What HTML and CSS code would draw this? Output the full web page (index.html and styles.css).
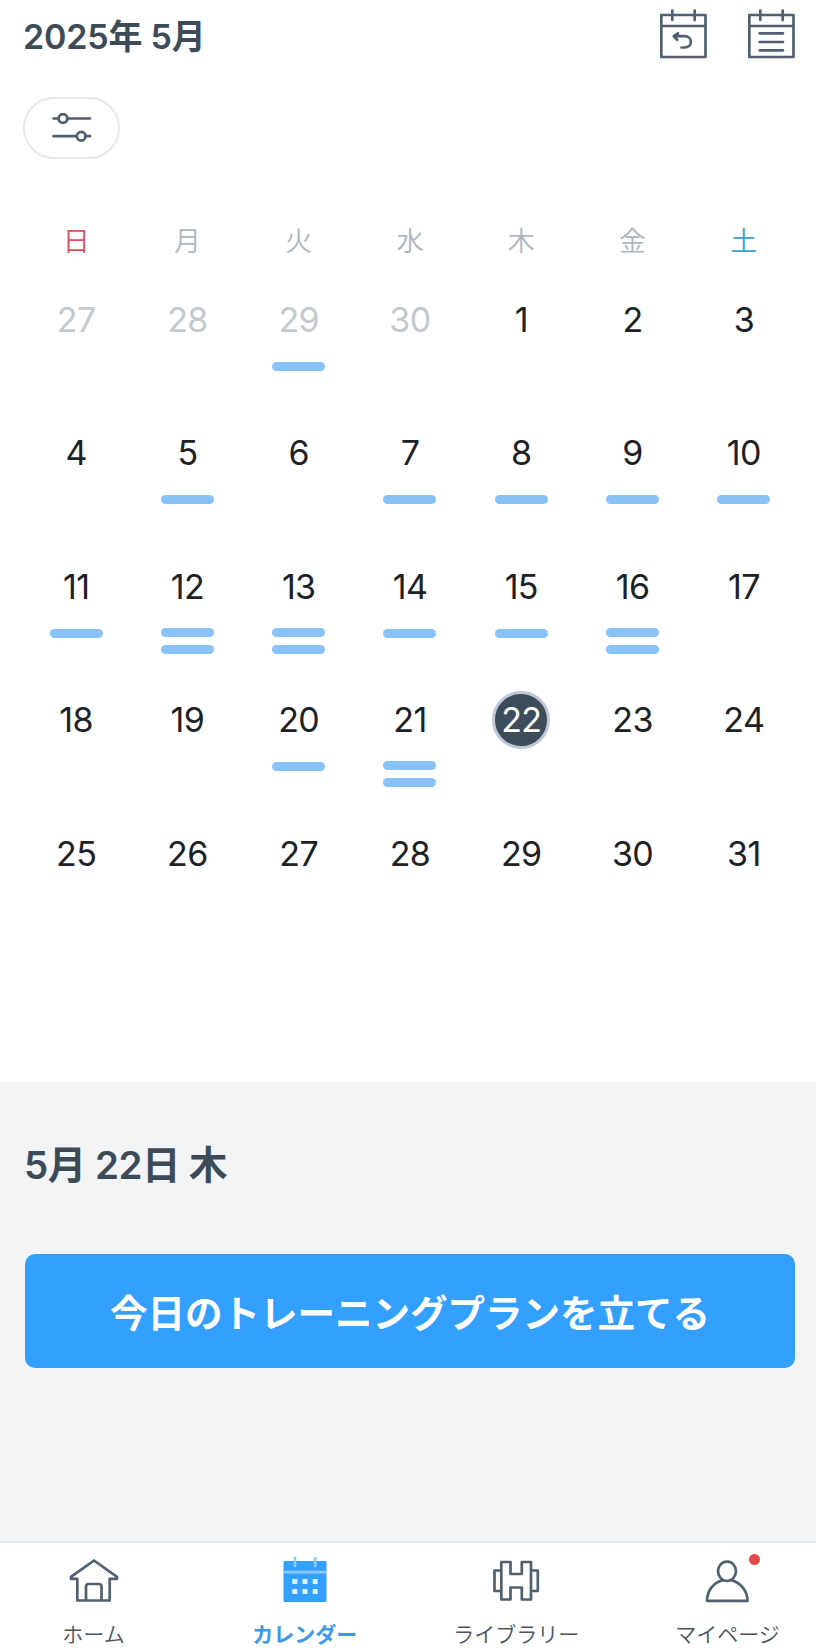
FILE: index.html
```html
<!DOCTYPE html>
<html lang="ja">
	<head>
		<meta charset="utf-8">
		<title>カレンダー</title>
		<link rel="stylesheet" href="styles.css">
	</head>
	<body>
		<div class="header">
			<div class="month">2025年 5月</div>
			<div class="actions">
				<svg class="actionIcon" width="48" height="50" viewBox="0 0 48 50">
					<path d="M2.300 6h44.200v42H2.300zM2.300 17h44.200M13.300 1.500v9.500M35.700 1.500v9.500"/>
					<path d="M19 24.300l-4.200 2.900 3.400 3.500M15.500 27.200H25.500c8.500 0 8.500 11.300 0 11.300h-3"/>
				</svg>
				<svg class="actionIcon" width="48" height="50" viewBox="0 0 48 50">
					<path d="M2.300 6h44.200v42H2.300zM2.300 17h44.200M13.300 1.500v9.500M35.700 1.500v9.500"/>
					<path d="M12.700 24.300h23.300M12.700 33h23.300M12.700 41.300h23.300"/>
				</svg>
			</div>
		</div>

		<div class="filterButton">
			<svg width="40" height="30" viewBox="0 0 40 30">
				<path d="M1.500 5.500h5M15 5.500h23M1.500 23.200h23M33 23.200h5"/>
				<circle cx="11" cy="5.500" r="4.400"/>
				<circle cx="29.200" cy="23.200" r="4.400"/>
			</svg>
		</div>

		<div class="weekdays">
			<div class="sunday">日</div>
			<div>月</div>
			<div>火</div>
			<div>水</div>
			<div>木</div>
			<div>金</div>
			<div class="saturday">土</div>
		</div>
		<div id="days" class="days"></div>

		<div class="plan">
			<div class="planDate">5月 22日 木</div>
			<div class="planButton">今日のトレーニングプランを立てる</div>
		</div>

		<div class="nav">
			<div class="navItem">
				<svg width="52" height="48" viewBox="0 0 52 48">
					<path d="M26 3.500L3 19.800v2h6.300V43.500h32.400V21.800H49v-2zM18 43V29.500q0-2.500 2.500-2.500h10.500q2.500 0 2.500 2.500V43"/>
				</svg>
				<span>ホーム</span>
			</div>
			<div class="navItem active">
				<svg width="52" height="48" viewBox="0 0 52 48">
					<rect class="fill" x="4.500" y="4" width="43" height="41" rx="1"/>
					<path class="light" d="M4.500 15.200h43M16 0v10M36.200 0v10"/>
					<path class="dots" d="M13.300 22h5v5h-5zM23.500 22h5v5h-5zM33.700 22h5v5h-5zM13.300 32h5v5h-5zM23.500 32h5v5h-5zM33.700 32h5v5h-5z"/>
				</svg>
				<span>カレンダー</span>
			</div>
			<div class="navItem">
				<svg width="52" height="48" viewBox="0 0 52 48">
					<path d="M11.300 5h9.200v12h11.300V5H41v37.500h-9.200v-12H20.500v12h-9.200zM11.300 13.500H4.500v20.500h6.800M41 13.500h6.800v20.500H41"/>
				</svg>
				<span>ライブラリー</span>
			</div>
			<div class="navItem">
				<svg width="52" height="48" viewBox="0 0 52 48">
					<ellipse cx="26" cy="14.300" rx="9" ry="9.700"/>
					<path d="M21.500 23.300C12 26 6 34 6 43.800h40.500C46.500 34 40 26 30.500 23.300"/>
				</svg>
				<span>マイページ</span>
				<i class="badge"></i>
			</div>
		</div>

		<script type="text/javascript">
			var today = 22;
			var lastMonth = [27, 28, 29, 30];
			// number of trainings by cell, row by row
			var trainings = [
				0, 0, 1, 0, 0, 0, 0,
				0, 1, 0, 1, 1, 1, 1,
				1, 2, 2, 1, 1, 2, 0,
				0, 0, 1, 2, 0, 0, 0,
				0, 0, 0, 0, 0, 0, 0
			];

			function addDay(box, i) {
				var isLast = i < lastMonth.length;
				var num = isLast ? lastMonth[i] : i - lastMonth.length + 1;
				var day = document.createElement('div');
				day.className = 'day';
				if (isLast) day.className += ' other';
				if (!isLast && num == today) day.className += ' today';
				if (trainings[i] > 1) day.className += ' multi';
				day.innerHTML = '<div class="number">' + num + '</div>' +
					'<div class="bars">' + '<div class="bar"></div>'.repeat(trainings[i]) + '</div>';
				box.appendChild(day);
			}

			(function() {
				var box = document.getElementById('days');
				for(var i = 0; i < trainings.length; i++) {
					addDay(box, i);
				}
			})();
		</script>
	</body>
</html>
```
FILE: styles.css
```css
html, body {
	margin: 0;
	padding: 0;
	width: 100%;
	height: 100%;
}

body {
	display: flex;
	flex-direction: column;
	height: 1648px;
	overflow: hidden;
	background: #fff;
	color: #3d4b59;
	font-family: Inter, "Noto Sans CJK JP", sans-serif;
}

svg {
	display: block;
	flex-shrink: 0;
	fill: none;
	stroke: #506070;
	stroke-width: 2.7;
	stroke-linecap: round;
	stroke-linejoin: round;
}

.header {
	display: flex;
	justify-content: space-between;
	box-sizing: border-box;
	height: 97px;
	padding: 9px 21px 0 23px;
}

.month {
	height: 56px;
	line-height: 56px;
	font-size: 34px;
	font-weight: 600;
	letter-spacing: -0.2px;
	white-space: nowrap;
}

.actions {
	display: flex;
	gap: 40px;
}

.filterButton {
	display: flex;
	align-items: center;
	justify-content: center;
	box-sizing: border-box;
	width: 97px;
	height: 62px;
	margin-left: 23px;
	border: 2px solid #e8e9ea;
	border-radius: 31px;
}

.weekdays, .days {
	display: grid;
	grid-template-columns: repeat(7, 1fr);
	margin: 0 16.5px 0 20.5px;
	text-align: center;
}

.weekdays {
	height: 40px;
	margin-top: 63px;
	line-height: 40px;
	color: #aeb6bf;
	font-size: 27px;
	font-weight: 350;
}

.sunday {
	color: #d9515c;
}

.saturday {
	color: #3d9fd3;
}

.days {
	grid-auto-rows: 133.4px;
	margin-top: 29px;
}

.day {
	display: flex;
	flex-direction: column;
	align-items: center;
}

.number {
	box-sizing: border-box;
	width: 58px;
	height: 58px;
	line-height: 58px;
	color: #1c2126;
	font-size: 34px;
	font-weight: 400;
	letter-spacing: -0.6px;
	text-align: center;
}

.other .number {
	color: #c3c9ce;
}

.today .number {
	border: 3px solid #bdc9d6;
	border-radius: 50%;
	line-height: 52px;
	background: #3e4b5a;
	color: #fff;
}

.bars {
	display: flex;
	flex-direction: column;
	gap: 8px;
	margin-top: 13px;
}

.multi .bars {
	margin-top: 12px;
}

.bar {
	width: 53px;
	height: 9px;
	border-radius: 5px;
	background: #89c2f6;
}

.plan {
	flex: 1;
	margin-top: 124px;
	padding: 56px 21px 0 25px;
	background: #f2f4f6;
}

.planDate {
	height: 54px;
	margin-left: -1px;
	line-height: 54px;
	font-size: 38.5px;
	font-weight: 600;
	letter-spacing: -0.5px;
}

.planButton {
	height: 114px;
	margin-top: 62px;
	border-radius: 10px;
	line-height: 119px;
	background: #339fff;
	color: #fff;
	font-size: 37.5px;
	font-weight: 700;
	text-align: center;
}

.nav {
	display: flex;
	justify-content: space-between;
	box-sizing: border-box;
	height: 107px;
	padding: 14px 22.5px 0 27.5px;
	border-top: 2px solid #e4e9ed;
}

.navItem {
	position: relative;
	display: flex;
	flex-direction: column;
	align-items: center;
	width: 132px;
	color: #4a545e;
	font-size: 21px;
	font-weight: 350;
	white-space: nowrap;
}

.navItem span {
	margin-top: 15px;
	line-height: 30px;
}

.active {
	color: #3d98e8;
	font-weight: 700;
}

.active .fill {
	fill: #339fff;
	stroke: none;
}

.active .light {
	stroke: #8ccaff;
	stroke-linecap: butt;
}

.active .dots {
	fill: #d8f3ff;
	stroke: none;
}

.badge {
	position: absolute;
	top: -3px;
	right: 33px;
	width: 11px;
	height: 11px;
	border-radius: 50%;
	background: #e5484d;
}
```
